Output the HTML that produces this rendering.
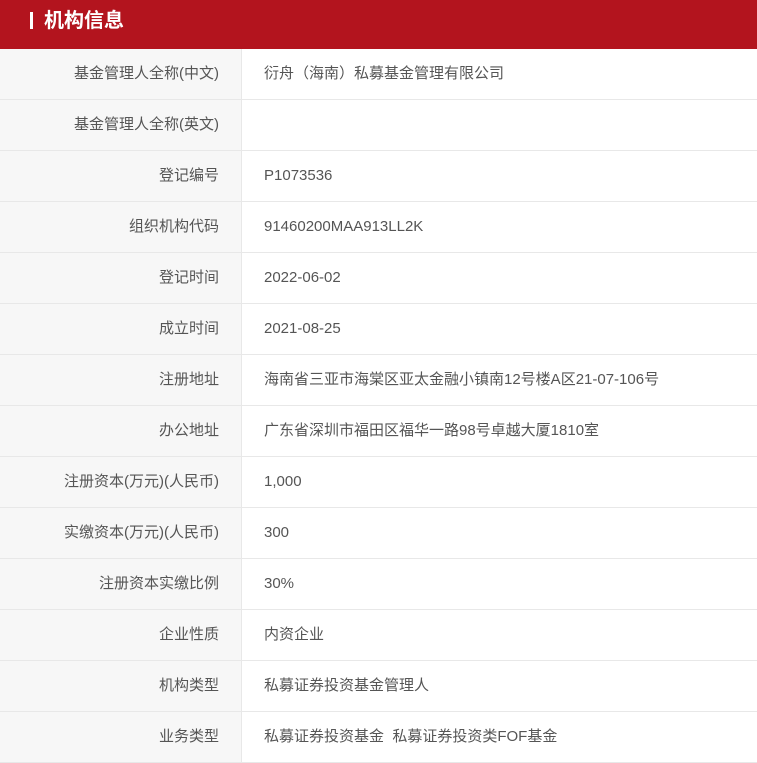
<html><head><style>
body{margin:0;width:757px;height:754px;overflow:hidden;background:#fff;font-family:"Liberation Sans","Noto Sans CJK SC",sans-serif;}
.h{height:49px;background:#b3141e;color:#fff;font-weight:bold;font-size:20px;line-height:42px;padding-left:30px;position:relative}
.h i{display:inline-block;width:3px;height:17px;background:#fff;vertical-align:-2px;margin-right:11px}
.r{display:flex;height:50px;border-bottom:1px solid #e8e8e8;font-size:15px;color:#555;line-height:50px}
.l{width:219px;padding-right:22px;text-align:right;background:#f7f7f7;border-right:1px solid #e8e8e8}
.v{padding-left:22px}
</style></head><body>
<div class="h"><i></i>机构信息</div>
<div class="r"><div class="l">基金管理人全称(中文)</div><div class="v">衍舟（海南）私募基金管理有限公司</div></div>
<div class="r"><div class="l">基金管理人全称(英文)</div><div class="v"></div></div>
<div class="r"><div class="l">登记编号</div><div class="v">P1073536</div></div>
<div class="r"><div class="l">组织机构代码</div><div class="v">91460200MAA913LL2K</div></div>
<div class="r"><div class="l">登记时间</div><div class="v">2022-06-02</div></div>
<div class="r"><div class="l">成立时间</div><div class="v">2021-08-25</div></div>
<div class="r"><div class="l">注册地址</div><div class="v">海南省三亚市海棠区亚太金融小镇南12号楼A区21-07-106号</div></div>
<div class="r"><div class="l">办公地址</div><div class="v">广东省深圳市福田区福华一路98号卓越大厦1810室</div></div>
<div class="r"><div class="l">注册资本(万元)(人民币)</div><div class="v">1,000</div></div>
<div class="r"><div class="l">实缴资本(万元)(人民币)</div><div class="v">300</div></div>
<div class="r"><div class="l">注册资本实缴比例</div><div class="v">30%</div></div>
<div class="r"><div class="l">企业性质</div><div class="v">内资企业</div></div>
<div class="r"><div class="l">机构类型</div><div class="v">私募证券投资基金管理人</div></div>
<div class="r"><div class="l">业务类型</div><div class="v">私募证券投资基金&nbsp;&nbsp;私募证券投资类FOF基金</div></div>
</body></html>
